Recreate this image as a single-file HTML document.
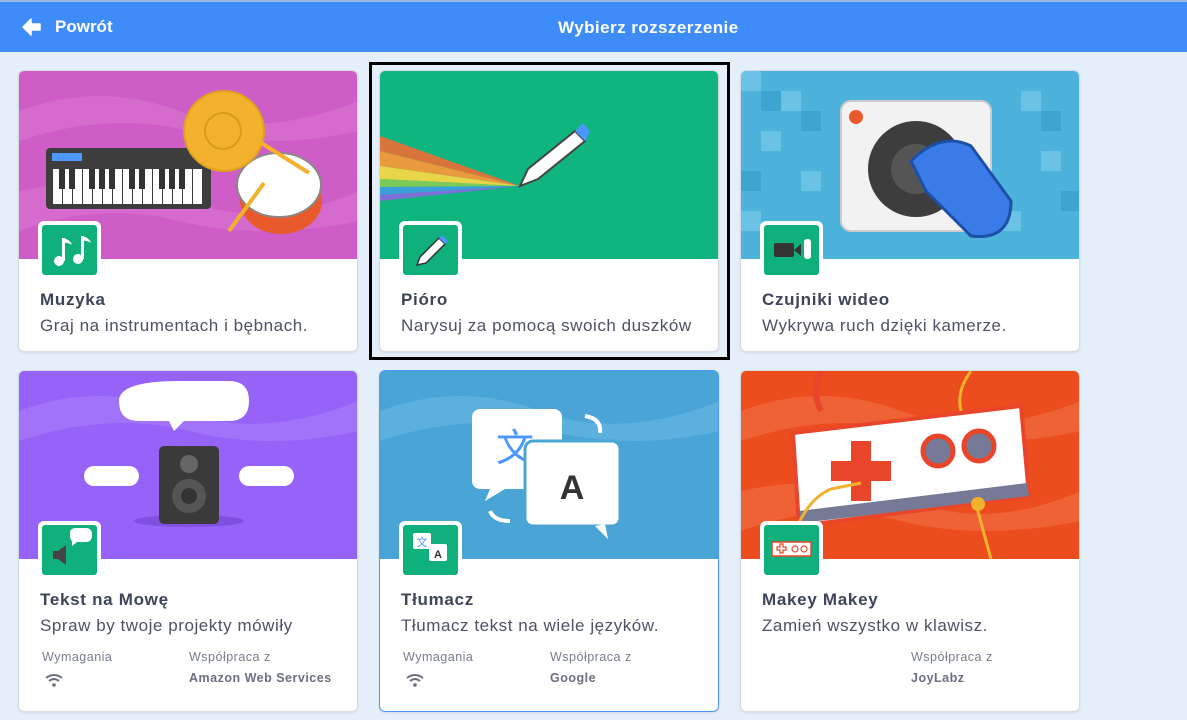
<!DOCTYPE html>
<html><head><meta charset="utf-8"><style>
*{box-sizing:border-box;margin:0;padding:0}
body{width:1187px;height:720px;background:#e5eff9;font-family:"Liberation Sans",Arial,sans-serif;overflow:hidden;position:relative;color:#575e75}
.hdr{position:absolute;left:0;top:0;width:1187px;height:52px;background:#3d8cf9;color:#fff;border-top:2px solid #9cb8e0}
.hdr .back{position:absolute;left:22px;top:15px;font-size:17px;font-weight:bold;display:flex;align-items:center}
.hdr .t{position:absolute;left:558px;top:16px;font-size:17px;font-weight:bold;letter-spacing:.45px}
.card{position:absolute;width:340px;background:#fff;border:1px solid #d6dbe3;border-radius:6px;overflow:hidden;box-shadow:0 1px 2px rgba(0,0,0,.08)}
.card svg.art{position:absolute;left:0;top:0;width:340px;height:188px;display:block}
.ic{position:absolute;left:19px;top:150px;width:63px;height:62px;background:#fff;border-radius:6px}
.ic .g{position:absolute;left:4px;top:4px;width:55px;height:50px;background:#0fb07c;border-radius:3px}
.ttl{position:absolute;left:21px;top:219px;font-size:17px;letter-spacing:.7px;font-weight:bold;color:#3e4459}
.dsc{position:absolute;left:21px;top:245px;font-size:17px;letter-spacing:.55px;color:#4d5264}
.sm{position:absolute;top:279px;font-size:12.5px;letter-spacing:.5px;color:#777d8e}
.sb{position:absolute;top:300px;font-size:12.5px;letter-spacing:.5px;font-weight:bold;color:#6a6f80}
.wifi{position:absolute;left:25px;top:302px}
</style></head><body>
<div class="hdr"><div class="back"><svg width="20" height="18" viewBox="0 0 20 18"><path d="M9 1 L1 9 L9 17 L9 12 L18 12 L18 6 L9 6 Z" fill="#fff" stroke="#fff" stroke-linejoin="round" stroke-width="1.5"/></svg><span style="margin-left:13px">Powrót</span></div><div class="t">Wybierz rozszerzenie</div></div>

<div style="position:absolute;left:369px;top:62px;width:361px;height:298px;border:3px solid #000"></div>

<div class="card" style="left:18px;top:70px;height:282px">
<svg class="art" viewBox="0 0 340 188"><rect width="340" height="188" fill="#cf5dc7"/>
<path d="M0 40 Q80 10 160 40 T340 30 L340 60 Q250 80 170 60 T0 70Z" fill="#d56bcd"/>
<path d="M0 120 Q90 100 170 130 T340 120 L340 150 Q240 170 160 150 T0 160Z" fill="#d56bcd"/>
<rect x="27" y="77" width="165" height="61" rx="4" fill="#3d3d3d"/>
<rect x="33" y="82" width="30" height="8" fill="#4d97ff"/>
<g fill="#fff">
<rect x="34" y="98" width="9" height="35"/><rect x="44" y="98" width="9" height="35"/><rect x="54" y="98" width="9" height="35"/><rect x="64" y="98" width="9" height="35"/><rect x="74" y="98" width="9" height="35"/><rect x="84" y="98" width="9" height="35"/><rect x="94" y="98" width="9" height="35"/><rect x="104" y="98" width="9" height="35"/><rect x="114" y="98" width="9" height="35"/><rect x="124" y="98" width="9" height="35"/><rect x="134" y="98" width="9" height="35"/><rect x="144" y="98" width="9" height="35"/><rect x="154" y="98" width="9" height="35"/><rect x="164" y="98" width="9" height="35"/><rect x="174" y="98" width="9" height="35"/></g>
<g fill="#333"><rect x="40" y="98" width="6" height="20"/><rect x="50" y="98" width="6" height="20"/><rect x="70" y="98" width="6" height="20"/><rect x="80" y="98" width="6" height="20"/><rect x="90" y="98" width="6" height="20"/><rect x="110" y="98" width="6" height="20"/><rect x="120" y="98" width="6" height="20"/><rect x="140" y="98" width="6" height="20"/><rect x="150" y="98" width="6" height="20"/><rect x="160" y="98" width="6" height="20"/></g>
<ellipse cx="262" cy="130" rx="41" ry="33" fill="#e85a2c"/><ellipse cx="260" cy="114" rx="42" ry="32" fill="#fff" stroke="#888" stroke-width="2"/>
<circle cx="205" cy="60" r="40" fill="#f3b22e" stroke="#e0a020" stroke-width="2"/><circle cx="204" cy="60" r="18" fill="none" stroke="#d99a1c" stroke-width="2"/>
<line x1="236" y1="68" x2="290" y2="102" stroke="#f3b22e" stroke-width="4"/><line x1="245" y1="112" x2="210" y2="160" stroke="#f3b22e" stroke-width="4"/>
</svg>
<div class="ic"><div class="g"><svg width="55" height="50" viewBox="0 0 55 50"><g fill="#fff"><circle cx="17" cy="36" r="5"/><circle cx="36" cy="34" r="5"/><rect x="20" y="13" width="3" height="23"/><rect x="39" y="11" width="3" height="23"/><path d="M20 13 Q28 14 30 20 Q26 17 20 18Z"/><path d="M39 11 Q47 12 49 18 Q45 15 39 16Z"/></g></svg></div></div>
<div class="ttl">Muzyka</div><div class="dsc">Graj na instrumentach i bębnach.</div>
</div>

<div class="card" style="left:379px;top:70px;height:282px">
<svg class="art" viewBox="0 0 340 188"><rect width="340" height="188" fill="#0fb47f"/>
<path d="M0 65 L140 115 L0 80Z" fill="#d9743c"/><path d="M0 80 L140 115 L0 95Z" fill="#e99a3c"/><path d="M0 95 L140 115 L0 108Z" fill="#e8d54a"/><path d="M0 108 L140 115 L0 116Z" fill="#7bcb5a"/><path d="M0 116 L140 115 L0 124Z" fill="#3aa0d8"/><path d="M0 124 L140 115 L0 130Z" fill="#7f6fd8"/>
<path d="M140 115 L148 98 L195 60 L205 70 L158 108Z" fill="#fff" stroke="#444" stroke-width="2"/>
<path d="M195 60 L203 52 L210 60 L205 70Z" fill="#4c97ff"/>
</svg>
<div class="ic"><div class="g"><svg width="55" height="50" viewBox="0 0 55 50"><path d="M14 40 L17 32 L36 13 L42 19 L23 38Z" fill="#fff" stroke="#333" stroke-width="1.5"/><path d="M36 13 L39 10 L45 16 L42 19Z" fill="#4c97ff"/></svg></div></div>
<div class="ttl">Pióro</div><div class="dsc">Narysuj za pomocą swoich duszków</div>
</div>

<div class="card" style="left:740px;top:70px;height:282px">
<svg class="art" viewBox="0 0 340 188"><rect width="340" height="188" fill="#4eb3dc"/>
<g fill="#6ac2e4"><rect x="0" y="0" width="20" height="20"/><rect x="40" y="20" width="20" height="20"/><rect x="20" y="60" width="20" height="20"/><rect x="60" y="100" width="20" height="20"/><rect x="280" y="20" width="20" height="20"/><rect x="300" y="80" width="20" height="20"/><rect x="260" y="140" width="20" height="20"/><rect x="0" y="140" width="20" height="20"/></g>
<g fill="#3ea5d0"><rect x="20" y="20" width="20" height="20"/><rect x="60" y="40" width="20" height="20"/><rect x="0" y="100" width="20" height="20"/><rect x="300" y="40" width="20" height="20"/><rect x="320" y="120" width="20" height="20"/></g>
<rect x="100" y="30" width="150" height="130" rx="10" fill="#f2f2f2" stroke="#ccc" stroke-width="2"/>
<circle cx="115" cy="46" r="7" fill="#e85a2c"/>
<circle cx="175" cy="98" r="48" fill="#3d3d3d"/><circle cx="175" cy="98" r="25" fill="#555"/>
<path d="M170 90 Q200 60 230 75 L270 130 Q270 170 230 165 L185 120 Z" fill="#3b7be8" stroke="#1d4fa8" stroke-width="3"/>
</svg>
<div class="ic"><div class="g"><svg width="55" height="50" viewBox="0 0 55 50"><rect x="10" y="18" width="20" height="14" rx="2" fill="#333"/><path d="M30 25 L37 19 L37 31Z" fill="#333"/><rect x="40" y="14" width="7" height="20" rx="3" fill="#fff"/></svg></div></div>
<div class="ttl">Czujniki wideo</div><div class="dsc">Wykrywa ruch dzięki kamerze.</div>
</div>

<div class="card" style="left:18px;top:370px;height:342px">
<svg class="art" viewBox="0 0 340 188"><rect width="340" height="188" fill="#9762f8"/>
<path d="M0 40 Q80 10 160 40 T340 30 L340 60 Q250 80 170 60 T0 70Z" fill="#a173f9"/>
<path d="M100 30 Q100 10 160 10 L210 10 Q230 10 230 30 Q230 50 210 50 L165 50 L155 60 L150 50 L120 50 Q100 50 100 30Z" fill="#fff"/>
<rect x="65" y="95" width="55" height="20" rx="10" fill="#fff"/><rect x="220" y="95" width="55" height="20" rx="10" fill="#fff"/>
<ellipse cx="170" cy="150" rx="55" ry="6" fill="#7f4fe0"/>
<rect x="140" y="75" width="60" height="78" rx="5" fill="#3a3a3a"/><circle cx="170" cy="93" r="9" fill="#666"/><circle cx="170" cy="125" r="17" fill="#555"/><circle cx="170" cy="125" r="8" fill="#333"/>
</svg>
<div class="ic"><div class="g"><svg width="55" height="50" viewBox="0 0 55 50"><path d="M11 26 L16 26 L24 20 L24 40 L16 34 L11 34Z" fill="#444"/><path d="M28 8 Q28 3 34 3 L44 3 Q50 3 50 10 Q50 17 44 17 L35 17 L30 21 L30 16 Q28 15 28 10Z" fill="#fff"/></svg></div></div>
<div class="ttl">Tekst na Mowę</div><div class="dsc">Spraw by twoje projekty mówiły</div>
<div class="sm" style="left:23px">Wymagania</div><div class="sm" style="left:170px">Współpraca z</div>
<svg class="wifi" width="20" height="14" viewBox="0 0 20 14"><path d="M2 5 Q10 -1 18 5" stroke="#6a6f80" stroke-width="2" fill="none"/><path d="M5 8 Q10 4 15 8" stroke="#6a6f80" stroke-width="2" fill="none"/><circle cx="10" cy="12" r="1.8" fill="#6a6f80"/></svg>
<div class="sb" style="left:170px">Amazon Web Services</div>
</div>

<div class="card" style="left:379px;top:370px;height:342px;border:1px solid #4c97ff">
<svg class="art" viewBox="0 0 340 188"><rect width="340" height="188" fill="#4aa4d6"/>
<path d="M0 40 Q80 10 160 40 T340 30 L340 60 Q250 80 170 60 T0 70Z" fill="#5cb0dd"/>
<rect x="92" y="38" width="90" height="80" rx="8" fill="#fff"/><path d="M110 118 L105 130 L125 118Z" fill="#fff"/>
<text x="135" y="90" font-size="38" fill="#4c97ff" text-anchor="middle" font-family="Noto Sans CJK SC,sans-serif">文</text>
<rect x="145" y="70" width="95" height="85" rx="8" fill="#fff" stroke="#4aa4d6" stroke-width="3"/><path d="M215 155 L228 168 L225 153Z" fill="#fff"/>
<text x="192" y="128" font-size="34" font-weight="bold" fill="#333" text-anchor="middle" font-family="Liberation Sans,sans-serif">A</text>
<path d="M205 45 Q222 48 220 62" stroke="#fff" stroke-width="4" fill="none"/><path d="M110 140 Q114 150 130 150" stroke="#fff" stroke-width="4" fill="none"/>
</svg>
<div class="ic"><div class="g"><svg width="55" height="50" viewBox="0 0 55 50"><rect x="10" y="8" width="18" height="16" rx="2" fill="#fff"/><text x="19" y="21" font-size="11" fill="#4c97ff" text-anchor="middle" font-family="Noto Sans CJK SC,sans-serif">文</text><rect x="26" y="19" width="18" height="17" rx="2" fill="#fff"/><text x="35" y="33" font-size="11" font-weight="bold" fill="#333" text-anchor="middle">A</text></svg></div></div>
<div class="ttl">Tłumacz</div><div class="dsc">Tłumacz tekst na wiele języków.</div>
<div class="sm" style="left:23px">Wymagania</div><div class="sm" style="left:170px">Współpraca z</div>
<svg class="wifi" width="20" height="14" viewBox="0 0 20 14"><path d="M2 5 Q10 -1 18 5" stroke="#6a6f80" stroke-width="2" fill="none"/><path d="M5 8 Q10 4 15 8" stroke="#6a6f80" stroke-width="2" fill="none"/><circle cx="10" cy="12" r="1.8" fill="#6a6f80"/></svg>
<div class="sb" style="left:170px">Google</div>
</div>

<div class="card" style="left:740px;top:370px;height:342px">
<svg class="art" viewBox="0 0 340 188"><rect width="340" height="188" fill="#ec4d1e"/>
<path d="M0 40 Q80 10 160 40 T340 30 L340 60 Q250 80 170 60 T0 70Z" fill="#ef6235"/>
<path d="M0 120 Q90 100 170 130 T340 120 L340 150 Q240 170 160 150 T0 160Z" fill="#ef6235"/>
<path d="M80 0 Q70 20 80 40" stroke="#e8452b" stroke-width="6" fill="none"/>
<path d="M230 0 Q215 20 220 40" stroke="#f3b22e" stroke-width="3" fill="none"/>
<path d="M52 62 L280 35 L288 125 L58 155Z" fill="#fff" stroke="#e8452b" stroke-width="4"/>
<path d="M58 140 L286 112 L288 125 L60 152Z" fill="#777a96"/>
<path d="M110 70 h20 v20 h20 v20 h-20 v20 h-20 v-20 h-20 v-20 h20Z" fill="#e8452b"/>
<circle cx="197" cy="80" r="15" fill="#777a96" stroke="#e8452b" stroke-width="5"/><circle cx="238" cy="75" r="15" fill="#777a96" stroke="#e8452b" stroke-width="5"/>
<path d="M120 112 L90 118 Q60 130 45 188" stroke="#f3b22e" stroke-width="3" fill="none"/>
<path d="M236 137 L250 188" stroke="#f3b22e" stroke-width="3" fill="none"/><circle cx="237" cy="133" r="7" fill="#f3b22e"/>
</svg>
<div class="ic"><div class="g"><svg width="55" height="50" viewBox="0 0 55 50"><rect x="8" y="17" width="39" height="14" fill="#fff" stroke="#e8452b" stroke-width="1.5"/><path d="M13 22 h3 v-3 h3 v3 h3 v3 h-3 v3 h-3 v-3 h-3Z" fill="none" stroke="#e8452b" stroke-width="1.2"/><circle cx="31" cy="24" r="3" fill="none" stroke="#e8452b" stroke-width="1.2"/><circle cx="40" cy="24" r="3" fill="none" stroke="#e8452b" stroke-width="1.2"/></svg></div></div>
<div class="ttl">Makey Makey</div><div class="dsc">Zamień wszystko w klawisz.</div>
<div class="sm" style="left:170px">Współpraca z</div>
<div class="sb" style="left:170px">JoyLabz</div>
</div>
</body></html>
